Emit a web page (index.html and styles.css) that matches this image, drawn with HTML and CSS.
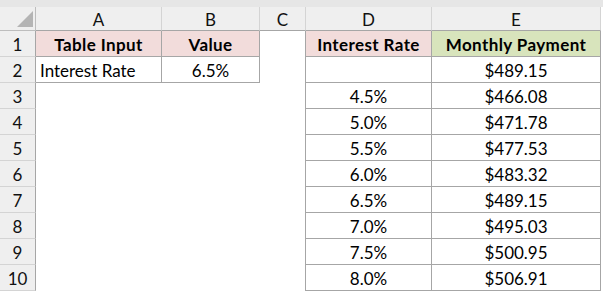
FILE: index.html
```html
<!DOCTYPE html>
<html>
<head>
<meta charset="utf-8">
<link rel="stylesheet" href="styles.css">
</head>
<body>
<div class="sheet">
  <div class="topbar"></div>
  <div class="grid">
    <div class="corner"><svg width="36" height="24" viewBox="0 0 36 24"><polygon points="33,4 33,20 17,20" fill="#b4b4b4"/></svg></div>
    <div class="colhead">A</div>
    <div class="colhead">B</div>
    <div class="colhead">C</div>
    <div class="colhead">D</div>
    <div class="colhead">E</div>

    <div class="rowhead">1</div>
    <div class="cell t pink bold">Table Input</div>
    <div class="cell t pink bold">Value</div>
    <div class="cell gap"></div>
    <div class="cell t pink bold">Interest Rate</div>
    <div class="cell t green bold">Monthly Payment</div>

    <div class="rowhead">2</div>
    <div class="cell t left">Interest Rate</div>
    <div class="cell t">6.5%</div>
    <div class="cell gap"></div>
    <div class="cell t"></div>
    <div class="cell t">$489.15</div>

    <div class="rowhead">3</div>
    <div class="cell blank"></div><div class="cell blank"></div><div class="cell gap"></div>
    <div class="cell t">4.5%</div><div class="cell t">$466.08</div>

    <div class="rowhead">4</div>
    <div class="cell blank"></div><div class="cell blank"></div><div class="cell gap"></div>
    <div class="cell t">5.0%</div><div class="cell t">$471.78</div>

    <div class="rowhead">5</div>
    <div class="cell blank"></div><div class="cell blank"></div><div class="cell gap"></div>
    <div class="cell t">5.5%</div><div class="cell t">$477.53</div>

    <div class="rowhead">6</div>
    <div class="cell blank"></div><div class="cell blank"></div><div class="cell gap"></div>
    <div class="cell t">6.0%</div><div class="cell t">$483.32</div>

    <div class="rowhead">7</div>
    <div class="cell blank"></div><div class="cell blank"></div><div class="cell gap"></div>
    <div class="cell t">6.5%</div><div class="cell t">$489.15</div>

    <div class="rowhead">8</div>
    <div class="cell blank"></div><div class="cell blank"></div><div class="cell gap"></div>
    <div class="cell t">7.0%</div><div class="cell t">$495.03</div>

    <div class="rowhead">9</div>
    <div class="cell blank"></div><div class="cell blank"></div><div class="cell gap"></div>
    <div class="cell t">7.5%</div><div class="cell t">$500.95</div>

    <div class="rowhead">10</div>
    <div class="cell blank"></div><div class="cell blank"></div><div class="cell gap"></div>
    <div class="cell t">8.0%</div><div class="cell t">$506.91</div>
  </div>
</div>
</body>
</html>
```

FILE: styles.css
```css
* { box-sizing: border-box; }
html, body { margin: 0; padding: 0; background: #ffffff; }
body { font-family: Lato, "Open Sans", sans-serif; font-size: 17px; color: #000; }
.sheet { width: 603px; height: 293px; overflow: hidden; }
.topbar { height: 7px; background: #e6e6e6; }
.grid {
  display: grid;
  grid-template-columns: 36px 126px 98px 46px 126px 169px;
  grid-template-rows: 24px repeat(10, 26px);
}
.corner { background: #efefef; border-right: 1px solid #bdbdbd; border-bottom: 1px solid #bdbdbd; line-height: 0; }
.colhead {
  background: #efefef;
  border-right: 1px solid #d4d4d4;
  border-bottom: 1px solid #a6a6a6;
  display: flex; align-items: center; justify-content: center;
  color: #111;
  padding-top: 1px;
}
.rowhead {
  background: #efefef;
  border-right: 1px solid #a6a6a6;
  border-bottom: 1px solid #d4d4d4;
  display: flex; align-items: center; justify-content: center;
  color: #111;
  padding-top: 1px;
}
.cell { display: flex; align-items: center; justify-content: center; padding-top: 1px; white-space: nowrap; }
.t { border-right: 1px solid #a6a6a6; border-bottom: 1px solid #a6a6a6; }
.gap { border-right: 1px solid #a6a6a6; }
.left { justify-content: flex-start; padding-left: 4px; }
.bold { font-weight: 700; letter-spacing: 0.4px; }
.pink { background: #f2dcdb; }
.green { background: #d8e4bc; }
```
